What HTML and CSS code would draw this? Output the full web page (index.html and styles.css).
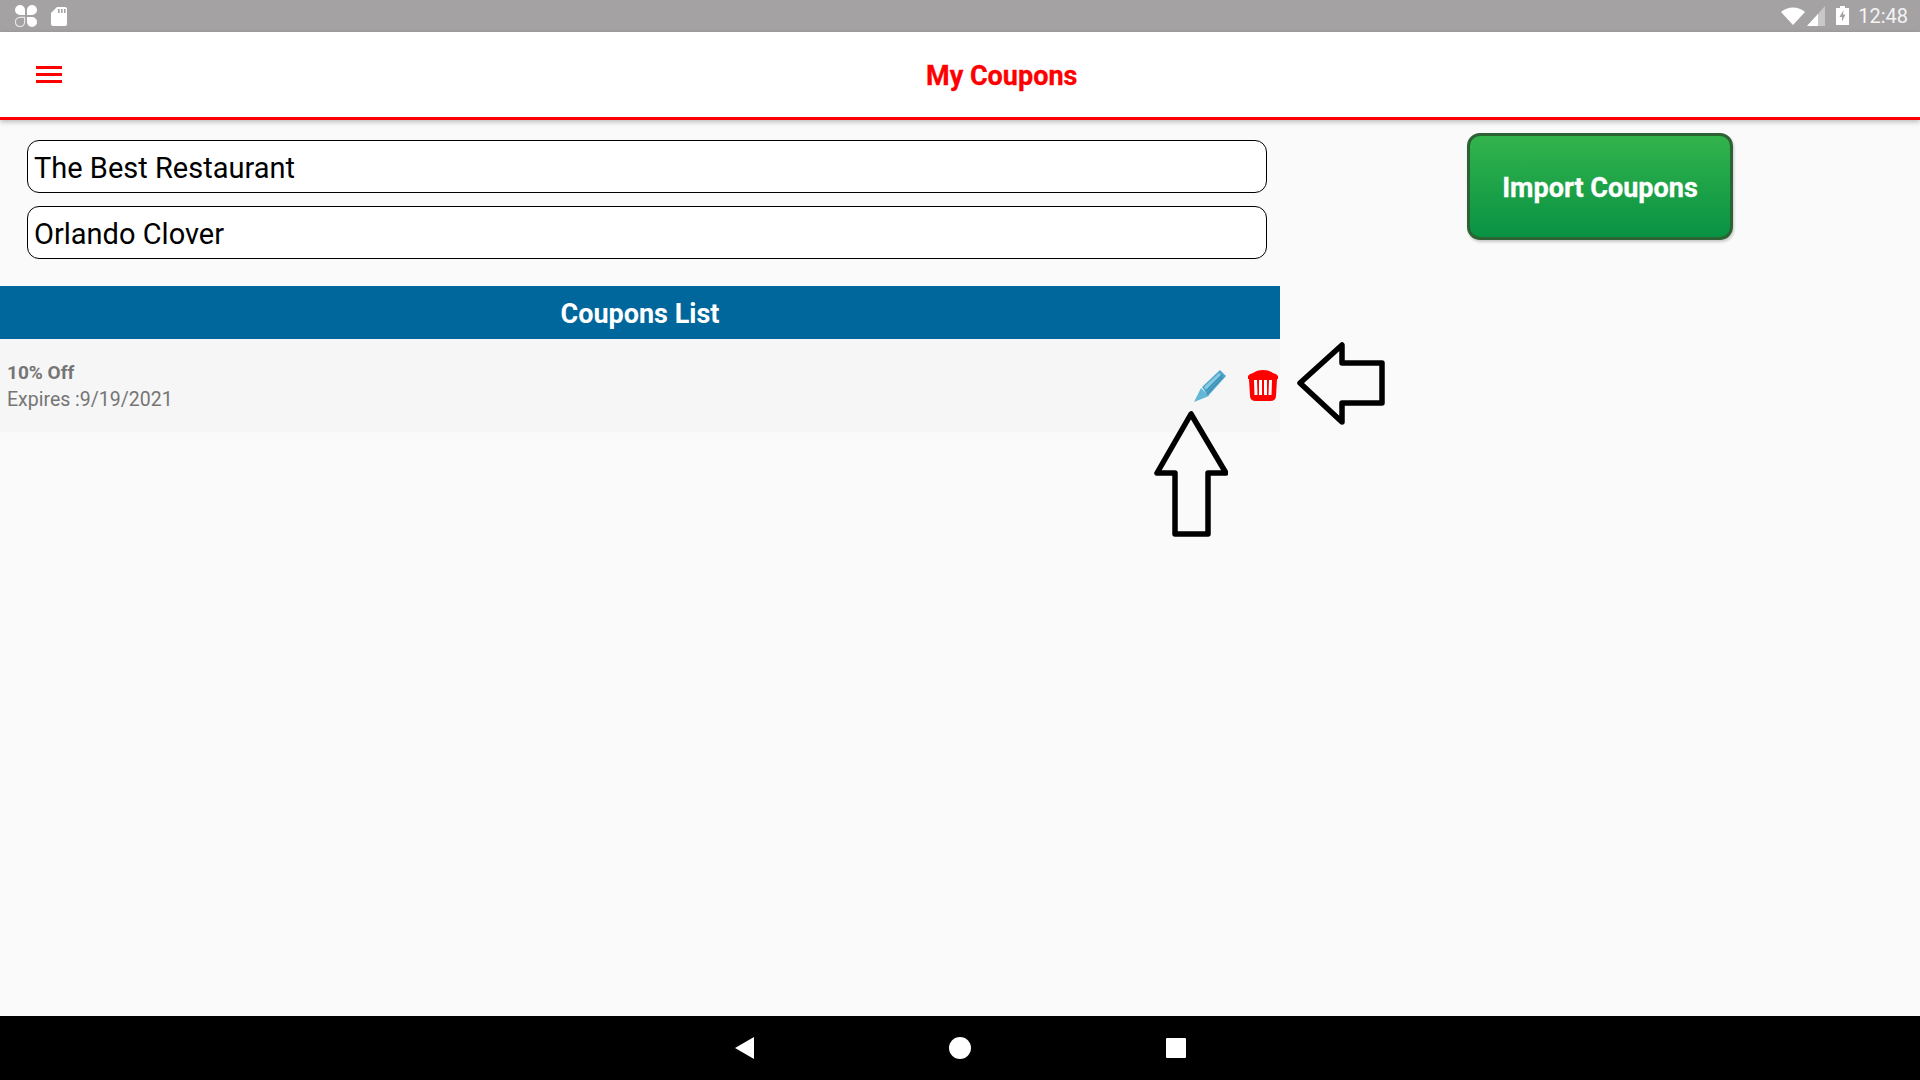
FILE: index.html
```html
<!DOCTYPE html>
<html lang="en">
  <head>
    <meta charset="UTF-8" />
    <title>My Coupons</title>
    <link rel="stylesheet" href="styles.css">
  </head>

  <body>
    <div class="status-bar">
      <div class="status-left">
        <svg class="ic-clover" viewBox="0 0 22 22" width="22" height="22">
          <path fill="#fff" d="M10 10H5a5 5 0 1 1 5-5zM12 10V5a5 5 0 1 1 5 5zM12 12h5a5 5 0 1 1-5 5z"/>
          <path fill="none" stroke="#e6e6e6" stroke-width="1.2" d="M9.600 12.400v4.600a4.600 4.600 0 1 1-4.600-4.600z"/>
        </svg>
        <svg viewBox="0 0 16 19" width="16" height="19">
          <path fill="#fff" d="M6 0h8a2 2 0 0 1 2 2v15a2 2 0 0 1-2 2H2a2 2 0 0 1-2-2V6z"/>
          <path fill="#a4a2a3" d="M7 2h1.600v4H7zM10 2h1.600v4H10zM13 2h1.600v4H13z"/>
        </svg>
      </div>
      <div class="status-right">
        <svg viewBox="0 0 24 18" width="24" height="18">
          <path fill="#fff" d="M0 5a18 18 0 0 1 24 0L12 18z"/>
        </svg>
        <svg class="ic-signal" viewBox="0 0 18 20" width="18" height="20">
          <path fill="#c9c8c8" d="M18 0v20H0z"/>
          <path fill="#fff" d="M11 8v12H0z"/>
        </svg>
        <svg class="ic-battery" viewBox="0 0 13 19" width="13" height="19">
          <path fill="#fff" d="M4 0h5v2h4v17H0V2h4z"/>
          <path fill="#a4a2a3" d="M7.500 4 3.500 11h2.500v4.500l3.500-7H7z"/>
        </svg>
        <span class="clock">12:48</span>
      </div>
    </div>

    <header class="top-bar">
      <svg class="menu-icon" viewBox="0 0 26 17" width="26" height="17">
        <path fill="#f00" d="M0 0h26v3H0zM0 7h26v3H0zM0 14h26v3H0z"/>
      </svg>
      <h1>My Coupons</h1>
    </header>

    <main class="page">
      <section class="left-col">
        <div class="fields">
          <div class="field">The Best Restaurant</div>
          <div class="field">Orlando Clover</div>
        </div>

        <div class="list-title">Coupons List</div>

        <div class="coupon-row">
          <div class="coupon-info">
            <div class="coupon-name">10% Off</div>
            <div class="coupon-date">Expires :9/19/2021</div>
          </div>
          <div class="coupon-actions">
            <svg viewBox="0 0 32 32" width="32" height="32">
              <path fill="#62b6d6" d="M0 32 7 18 15 26z"/>
              <path fill="#4fa6c9" d="M8 17 26 0 32 6 14 26z"/>
              <path fill="#86c9e2" d="M10 17 25 3 27 5 12 20z"/>
              <path fill="none" stroke="#3c8fb5" stroke-width="1.2" d="M12 21 28 5M13 24 29 7"/>
            </svg>
            <svg viewBox="0 0 30 31" width="30" height="31">
              <path fill="#f00" d="M0 6q1-2 5-3 4-3 10-3t10 3q4 1 5 3v3h-1l-1 17q0 5-6 5H8q-6 0-6-5L1 9H0z"/>
              <path fill="#fff" d="M6 10h3l.5 15H6.500zM11 10h3v15h-3zM16 10h3v15h-3zM21 10h3l-.5 15h-3z"/>
            </svg>
          </div>
        </div>
      </section>

      <aside class="right-col">
        <button class="import-btn">Import Coupons</button>
      </aside>
    </main>

    <footer class="nav-bar">
      <svg viewBox="0 0 19 22" width="19" height="22"><path fill="#fff" d="M19 0v22L0 11z"/></svg>
      <svg viewBox="0 0 22 22" width="22" height="22"><circle fill="#fff" cx="11" cy="11" r="11"/></svg>
      <svg viewBox="0 0 20 20" width="20" height="20"><rect fill="#fff" width="20" height="20" rx="1"/></svg>
    </footer>

    <!-- arrows drawn on top of the screenshot -->
    <svg class="arrow arrow-up" viewBox="0 0 74 126" width="74" height="126">
      <path d="M37 3 3 62H21V123H54V62H72Z"/>
    </svg>
    <svg class="arrow arrow-left" viewBox="0 0 90 84" width="90" height="84">
      <path d="M3 41 45 3V21H85V61H45V80Z"/>
    </svg>
  </body>
</html>
```

FILE: styles.css
```css
* {
  box-sizing: border-box;
}

body {
  font-family: "Roboto", sans-serif;
  background-color: #fafafa;
  display: flex;
  flex-direction: column;
  width: 1920px;
  height: 1080px;
  margin: 0;
  overflow: hidden;
  position: relative;
}

.status-bar {
  height: 32px;
  background-color: #a4a2a3;
  display: flex;
  justify-content: space-between;
  align-items: center;
  padding: 0 12px 0 15px;
}

.status-left {
  display: flex;
  align-items: center;
  gap: 14px;
}

.status-right {
  display: flex;
  align-items: center;
  gap: 2px;
}

.ic-signal {
  margin-top: -1px;
}

.ic-battery {
  margin: -2px 0 0 9px;
}

.clock {
  margin-left: 7px;
  color: #f4f4f4;
  font-size: 20px;
}

.top-bar {
  height: 88px;
  background-color: #ffffff;
  border-bottom: 3px solid #ff0000;
  box-shadow: 0 2px 5px rgba(0, 0, 0, 0.25);
  display: flex;
  align-items: center;
  padding: 0 36px;
  position: relative;
}

.menu-icon {
  margin-top: -1px;
}

.top-bar h1 {
  margin: 2px 0 0 864px;
  font-size: 27px;
  font-weight: 700;
  color: #ff0000;
  -webkit-text-stroke: 0.3px #ff0000;
}

.page {
  flex: 1;
  display: flex;
}

.left-col {
  width: 1280px;
}

.fields {
  display: flex;
  flex-direction: column;
  gap: 13px;
  padding: 20px 13px 27px 27px;
}

.field {
  height: 53px;
  background-color: #ffffff;
  border: 1.5px solid #000000;
  border-radius: 12px;
  display: flex;
  align-items: center;
  padding: 3px 0 0 6px;
  font-size: 29px;
  color: #000000;
}

.list-title {
  height: 53px;
  background-color: #00679c;
  color: #ffffff;
  font-size: 27px;
  font-weight: 700;
  padding-top: 2px;
  display: flex;
  align-items: center;
  justify-content: center;
}

.coupon-row {
  height: 93px;
  background-color: #f6f6f6;
  display: flex;
  align-items: center;
  justify-content: space-between;
  padding: 0 2px 0 7px;
}

.coupon-name {
  font-size: 19px;
  font-weight: 700;
  color: #757575;
  margin: 1px 0 4px;
}

.coupon-date {
  font-size: 19.500px;
  color: #757575;
}

.coupon-actions {
  display: flex;
  align-items: center;
  gap: 22px;
}

.right-col {
  padding: 13px 0 0 187px;
}

.import-btn {
  width: 266px;
  height: 107px;
  padding-top: 4px;
  background: linear-gradient(180deg, #32b34c, #089243);
  border: 3px solid #2c6234;
  border-radius: 13px;
  box-shadow: 1px 2px 3px rgba(0, 0, 0, 0.2);
  color: #ffffff;
  font-family: "Roboto", sans-serif;
  font-size: 27px;
  font-weight: 700;
  -webkit-text-stroke: 0.3px #ffffff;
}

.nav-bar {
  height: 64px;
  background-color: #000000;
  display: flex;
  align-items: center;
  justify-content: center;
  gap: 195px;
}

.arrow {
  position: absolute;
}

.arrow path {
  fill: none;
  stroke: #000000;
  stroke-width: 5.5;
  stroke-linejoin: round;
}

.arrow-up {
  left: 1154px;
  top: 411px;
}

.arrow-left {
  left: 1297px;
  top: 342px;
}
```
